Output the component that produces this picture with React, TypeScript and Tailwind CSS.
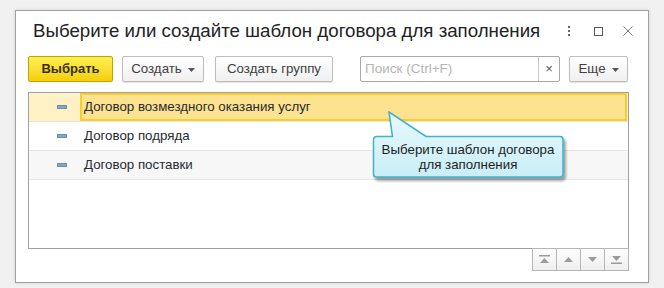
import React from "react";

const font = { fontFamily: '"Liberation Sans", Arial, sans-serif' };

const rows = [
  { name: "Договор возмездного оказания услуг", selected: true },
  { name: "Договор подряда" },
  { name: "Договор поставки", alt: true },
];

const Caret = () => (
  <svg width="7" height="4" viewBox="0 0 7 4" className="ml-[6px] mt-[2px]">
    <path d="M0 0h7L3.5 4z" fill="#555" />
  </svg>
);

const NavIcon = ({ kind }: { kind: string }) => (
  <svg width="11" height="9" viewBox="0 0 11 9">
    {kind === "first" && (
      <>
        <rect x="0" y="0" width="11" height="1.5" fill="#9a9a9a" />
        <path d="M1 8h9L5.5 3z" fill="#9a9a9a" />
      </>
    )}
    {kind === "up" && <path d="M1 7h9L5.5 2z" fill="#9a9a9a" />}
    {kind === "down" && <path d="M1 2h9L5.5 7z" fill="#9a9a9a" />}
    {kind === "last" && (
      <>
        <path d="M1 1h9L5.5 6z" fill="#9a9a9a" />
        <rect x="0" y="7.5" width="11" height="1.5" fill="#9a9a9a" />
      </>
    )}
  </svg>
);

const Callout = () => (
  <div className="absolute left-[356px] top-[100px] w-[196px] h-[72px]">
    <svg width="196" height="72" viewBox="0 0 196 72" className="absolute left-0 top-0">
      <defs>
        <linearGradient id="tip" x1="0" y1="0" x2="0" y2="1">
          <stop offset="0" stopColor="#e6fafd" />
          <stop offset="1" stopColor="#c9eef7" />
        </linearGradient>
        <filter id="sh" x="-10%" y="-10%" width="130%" height="140%">
          <feDropShadow dx="2" dy="3" stdDeviation="1.6" floodColor="#000" floodOpacity="0.4" />
        </filter>
      </defs>
      <path
        d="M20.5 25.5 L17 1 L54 25.5 H188 a3 3 0 0 1 3 3 V63 a3 3 0 0 1 -3 3 H4.5 a3 3 0 0 1 -3 -3 V28.5 a3 3 0 0 1 3 -3 Z"
        fill="url(#tip)"
        stroke="#3fb2c9"
        strokeWidth="1.5"
        filter="url(#sh)"
      />
    </svg>
    <div
      className="absolute left-[2px] top-[27px] w-[188px] h-[38px] flex flex-col items-center justify-center text-[13.3px] leading-[15px] text-[#1e1e1e]"
      style={font}
    >
      <div>Выберите шаблон договора</div>
      <div>для заполнения</div>
    </div>
  </div>
);

export default function App() {
  return (
    <div className="w-[664px] h-[288px] bg-[#f1f1f1] pt-[10px] pl-[15px]" style={font}>
      <div className="relative w-[634px] h-[273px] bg-white border border-[#9f9f9f] shadow-[0_0_4px_rgba(0,0,0,0.12)] pl-[12px] pr-[19px]">
        {/* title */}
        <div className="flex items-center h-[40px]">
          <div className="pl-[5px] text-[18.7px] text-[#222] flex-1 whitespace-nowrap">
            Выберите или создайте шаблон договора для заполнения
          </div>
          <div className="flex items-center mr-[-4px]">
            <div className="flex flex-col gap-[2px] mr-[24px]">
              <span className="w-[2px] h-[2px] bg-[#666]" />
              <span className="w-[2px] h-[2px] bg-[#666]" />
              <span className="w-[2px] h-[2px] bg-[#666]" />
            </div>
            <div className="w-[9px] h-[9px] border border-[#555] mr-[20px]" />
            <svg width="10" height="10" viewBox="0 0 10 10">
              <path d="M0.5 0.5l9 9M9.5 0.5l-9 9" stroke="#777" strokeWidth="1" />
            </svg>
          </div>
        </div>

        {/* toolbar */}
        <div className="flex items-center h-[26px] mt-[5px] text-[13.3px]">
          <button className="w-[85px] h-[26px] rounded-[2px] border border-[#c2a400] bg-gradient-to-b from-[#fff04d] to-[#f3cf00] font-bold text-[#3a2e10] text-[13px]">
            Выбрать
          </button>
          <button className="ml-[9px] w-[82px] h-[26px] flex items-center justify-center rounded-[2px] border border-[#bdbdbd] bg-gradient-to-b from-white to-[#f0f0f0] shadow-[0_1px_1px_rgba(0,0,0,0.12)] text-[#404040]">
            Создать
            <Caret />
          </button>
          <button className="ml-[11px] w-[118px] h-[26px] rounded-[2px] border border-[#bdbdbd] bg-gradient-to-b from-white to-[#f0f0f0] shadow-[0_1px_1px_rgba(0,0,0,0.12)] text-[#404040]">
            Создать группу
          </button>
          <div className="ml-[27px] w-[200px] h-[26px] flex rounded-[2px] border border-[#a9a9a9] bg-white">
            <div className="flex-1 flex items-center pl-[4px] text-[13.5px] text-[#b5b5b5]">Поиск (Ctrl+F)</div>
            <div className="w-[21px] border-l border-[#c4c4c4] flex items-center justify-center text-[13px] text-[#555]">
              ×
            </div>
          </div>
          <button className="ml-[9px] w-[59px] h-[26px] flex items-center justify-center rounded-[2px] border border-[#bdbdbd] bg-gradient-to-b from-white to-[#f0f0f0] shadow-[0_1px_1px_rgba(0,0,0,0.12)] text-[#404040]">
            Еще
            <Caret />
          </button>
        </div>

        {/* list */}
        <div className="mt-[10px] h-[157px] border border-[#a0a0a0] bg-white">
          {rows.map((r) => (
            <div
              key={r.name}
              className={`flex h-[29px] border-b border-[#e6e6e6] ${
                r.selected ? "bg-[#fdf1c5]" : r.alt ? "bg-[#f7f7f7]" : "bg-white"
              }`}
            >
              <div className="w-[51px] flex items-center pl-[28px]">
                <div className="w-[10px] h-[4px] bg-[#87a5c2] border border-[#6f8fae]" />
              </div>
              <div
                className={`flex-1 mr-px flex items-center pl-[2px] text-[13.3px] text-[#262a33] border-2 ${
                  r.selected ? "border-[#f8cd2c] bg-[#fde38f]" : "border-transparent"
                }`}
              >
                {r.name}
              </div>
            </div>
          ))}
        </div>

        {/* navigation */}
        <div className="flex justify-end mt-[-1px]">
          {["first", "up", "down", "last"].map((k, i) => (
            <div
              key={k}
              className={`w-[25px] h-[23px] flex items-center justify-center border border-[#b5b5b5] bg-gradient-to-b from-white to-[#eeeeee] ${
                i > 0 ? "-ml-px" : ""
              }`}
            >
              <NavIcon kind={k} />
            </div>
          ))}
        </div>

        <Callout />
      </div>
    </div>
  );
}
